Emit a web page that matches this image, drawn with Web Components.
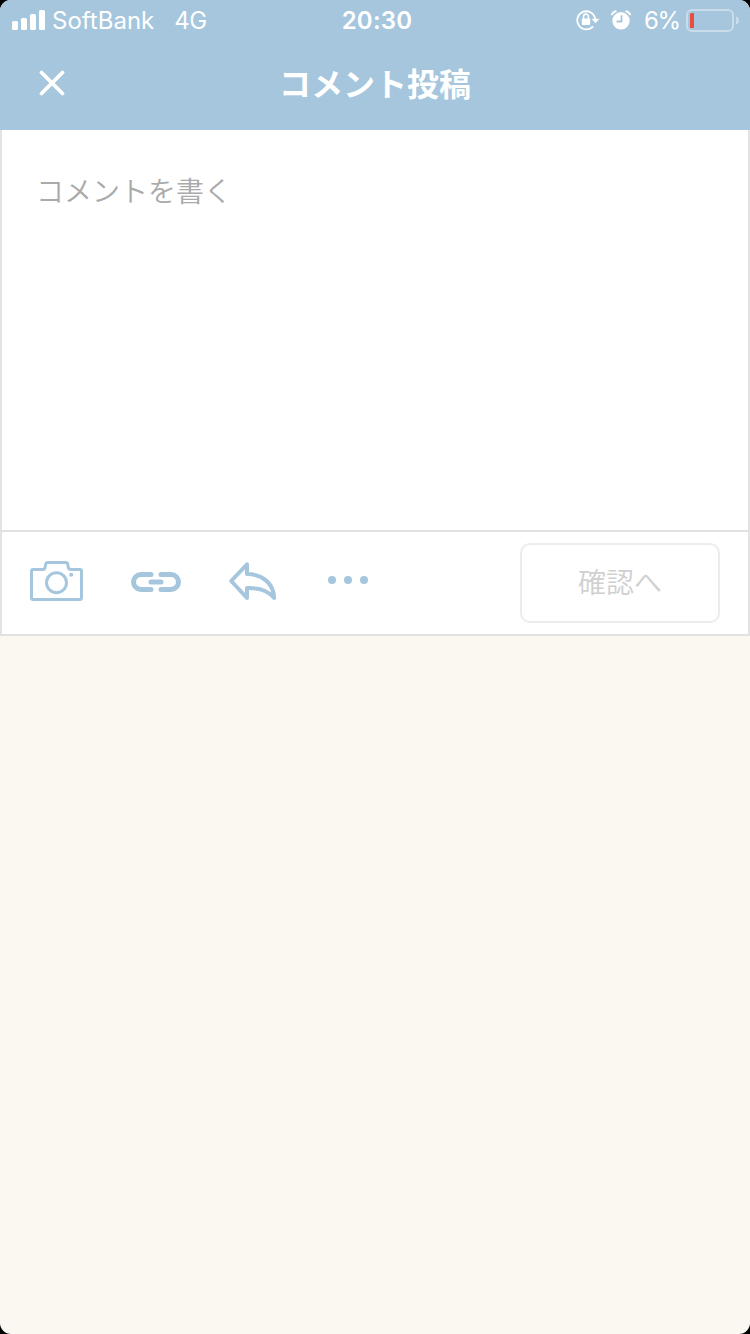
<!DOCTYPE html>
<html lang="ja">
<head>
<meta charset="utf-8">
<meta name="viewport" content="width=750">
<title>コメント投稿</title>
<style>
  html { background: #000; }
  body { margin: 0; }
</style>
</head>
<body>
<comment-page></comment-page>

<script>
class StatusBar extends HTMLElement {
  constructor() {
    super();
    this.attachShadow({ mode: 'open' });
  }

  connectedCallback() {
    this.shadowRoot.innerHTML = `
      <style>
        :host {
            height: 40px;
            display: grid;
            grid-template-columns: 1fr auto 1fr;
            align-items: center;
            padding: 0 11px 0 12px;
            box-sizing: border-box;
            color: #fff;
            font: 400 24px/38px Inter, sans-serif;
        }
        svg { display: block; flex-shrink: 0; }
        span, .time { padding-top: 2px; }
        .side { display: flex; align-items: center; height: 40px; white-space: nowrap; }
        .right { justify-content: flex-end; }
        .carrier { margin-left: 7px; letter-spacing: 0; }
        .network { margin-left: 20px; letter-spacing: -0.5px; }
        .time { font-weight: 600; letter-spacing: 0.2px; padding-left: 3px; }
        .lock { margin-right: 11px; }
        .alarm { margin-right: 13px; margin-top: -1px; }
        .percent { letter-spacing: -1.2px; margin-right: 6px; }
      </style>
      <div class="side">
        <svg width="33" height="20" viewBox="0 0 33 20" fill="#fff"><rect y="11" width="6" height="9" rx="1.5"/><rect x="9" y="8" width="6" height="12" rx="1.5"/><rect x="18" y="4" width="6" height="16" rx="1.5"/><rect x="27" width="6" height="20" rx="1.5"/></svg>
        <span class="carrier">SoftBank</span>
        <span class="network">4G</span>
      </div>
      <div class="time">20:30</div>
      <div class="side right">
        <svg class="lock" width="24" height="22" viewBox="0 0 24 22" fill="none" stroke="#fff" stroke-width="1.8">
          <path d="M19.2 10A9 9 0 1 0 17 17.3"/>
          <path d="M15.5 9.8h8l-4 4.500z" fill="#fff" stroke="none"/>
          <rect x="5.800" y="9.500" width="8.4" height="6.5" rx="1" fill="#fff" stroke="none"/>
          <path d="M7.600 10V7.500a2.4 2.4 0 0 1 4.8 0v2.5" stroke-width="1.6"/>
        </svg>
        <svg class="alarm" width="20" height="20" viewBox="0 0 20 20">
          <circle cx="10" cy="10.8" r="8.7" fill="#fff"/>
          <path d="M1 4.3Q2.2 2 4.8 1.2M19 4.3Q17.8 2 15.2 1.2" fill="none" stroke="#fff" stroke-width="2" stroke-linecap="round"/>
          <path d="M10.5 5.2v6.300H5.5" fill="none" stroke="#a5c6dd" stroke-width="1.8"/>
        </svg>
        <span class="percent">6%</span>
        <svg width="53" height="24" viewBox="0 0 53 24">
          <rect x="1" y="2" width="46" height="21" rx="5" fill="none" stroke="#c9dcea" stroke-width="2"/>
          <path d="M50 8.5c4 1 4 7 0 8z" fill="#c9dcea"/>
          <path d="M4 5V20H8V5H5.5Q4 5 4 6.5Z" fill="#eb4d3d"/>
        </svg>
      </div>
    `;
  }
}
customElements.define('status-bar', StatusBar);

class NavHeader extends HTMLElement {
  constructor() {
    super();
    this.attachShadow({ mode: 'open' });
  }

  connectedCallback() {
    this.shadowRoot.innerHTML = `
      <style>
        :host {
            height: 90px;
            display: grid;
            grid-template-columns: 104px 1fr 104px;
            align-items: center;
            padding-bottom: 4px;
            box-sizing: border-box;
            color: #fff;
        }
        button { display: flex; justify-content: center; padding: 0; border: 0; background: none; }
        h1 {
            margin: 0;
            padding-bottom: 2px;
            text-align: center;
            font: 700 32px/46px "Noto Sans CJK JP", sans-serif;
        }
      </style>
      <button aria-label="閉じる">
        <svg width="26" height="26" viewBox="0 0 26 26"><path d="M2.5 2.5l21 21M23.5 2.5l-21 21" stroke="#fff" stroke-width="3.8" stroke-linecap="round"/></svg>
      </button>
      <h1><slot></slot></h1>
    `;
  }
}
customElements.define('nav-header', NavHeader);

class ToolBar extends HTMLElement {
  constructor() {
    super();
    this.attachShadow({ mode: 'open' });
  }

  connectedCallback() {
    this.shadowRoot.innerHTML = `
      <style>
        :host {
            height: 102px;
            display: flex;
            align-items: center;
            justify-content: space-between;
            padding: 0 28px;
            box-sizing: border-box;
        }
        .icons { display: flex; align-items: center; padding-bottom: 4px; }
        .icons svg { display: block; fill: none; stroke: #a5c6dd; stroke-linecap: round; stroke-linejoin: round; }
        .link { margin-left: 48px; margin-top: 2px; }
        .reply { margin-left: 48px; }
        .more { margin-left: 51px; margin-top: -2px; }
      </style>
      <div class="icons">
        <svg class="camera" width="53" height="40" viewBox="0 0 53 40" stroke-width="3">
          <path d="M1.5 36.5V10Q1.5 8.5 3 8.5H12.5Q15 8.5 15.2 6L15.6 3.5Q16 1.5 18 1.5H35.5Q37.5 1.5 37.8 3.5L38.2 6Q38.5 8.5 41 8.5H50Q51.5 8.5 51.5 10V36.5Q51.5 38.5 50 38.5H3Q1.5 38.5 1.5 36.5Z"/>
          <circle cx="26.5" cy="21.7" r="10"/>
          <circle cx="41.2" cy="13.7" r="2" fill="#a5c6dd" stroke="none"/>
        </svg>
        <svg class="link" width="50" height="20" viewBox="0 0 50 20" stroke-width="5">
          <path d="M20 2.5H10a7.5 7.5 0 0 0 0 15h10M30 2.5h10a7.5 7.5 0 0 1 0 15H30M20 10H30"/>
        </svg>
        <svg class="reply" width="48" height="40" viewBox="0 0 48 40" stroke-width="4">
          <path d="M2.2 20L18 3.3V13.1C33 13 44.500 22 45.200 37C39 29.5 31 26.5 18 27.1V37L2.2 20Z"/>
        </svg>
        <svg class="more" width="40" height="8" viewBox="0 0 40 8">
          <g fill="#a5c6dd" stroke="none"><circle cx="4" cy="4" r="4"/><circle cx="20" cy="4" r="4"/><circle cx="36" cy="4" r="4"/></g>
        </svg>
      </div>
      <slot></slot>
    `;
  }
}
customElements.define('tool-bar', ToolBar);

class ConfirmButton extends HTMLElement {
  constructor() {
    super();
    this.attachShadow({ mode: 'open' });
  }

  connectedCallback() {
    this.shadowRoot.innerHTML = `
      <style>
        :host { display: block; }
        button {
            display: block;
            width: 200px;
            height: 80px;
            padding: 0 0 4px;
            border: 2px solid #ececec;
            border-radius: 10px;
            background: #fff;
            color: #d0d0d0;
            font: 350 28px/40px "Noto Sans CJK JP", sans-serif;
        }
      </style>
      <button><slot></slot></button>
    `;
  }
}
customElements.define('confirm-button', ConfirmButton);

class CommentForm extends HTMLElement {
  constructor() {
    super();
    this.attachShadow({ mode: 'open' });
  }

  connectedCallback() {
    this.shadowRoot.innerHTML = `
      <style>
        :host {
            display: block;
            background: #fff;
            border: 2px solid #e2e2e2;
            border-top: 0;
        }
        .field {
            height: 402px;
            padding: 39px 34px;
            box-sizing: border-box;
            border-bottom: 2px solid #e2e2e2;
            color: #aaa;
            font: 350 28px/42px "Noto Sans CJK JP", sans-serif;
        }
      </style>
      <div class="field">コメントを書く</div>
      <tool-bar><confirm-button>確認へ</confirm-button></tool-bar>
    `;
  }
}
customElements.define('comment-form', CommentForm);

class CommentPage extends HTMLElement {
  constructor() {
    super();
    this.attachShadow({ mode: 'open' });
  }

  connectedCallback() {
    this.shadowRoot.innerHTML = `
      <style>
        :host {
            display: block;
            width: 750px;
            height: 1334px;
            overflow: hidden;
            border-radius: 11px;
            background: #fbf8f1;
        }
        header { background: #a5c6dd; }
      </style>
      <header>
        <status-bar></status-bar>
        <nav-header>コメント投稿</nav-header>
      </header>
      <comment-form></comment-form>
    `;
  }
}
customElements.define('comment-page', CommentPage);
</script>
</body>
</html>
